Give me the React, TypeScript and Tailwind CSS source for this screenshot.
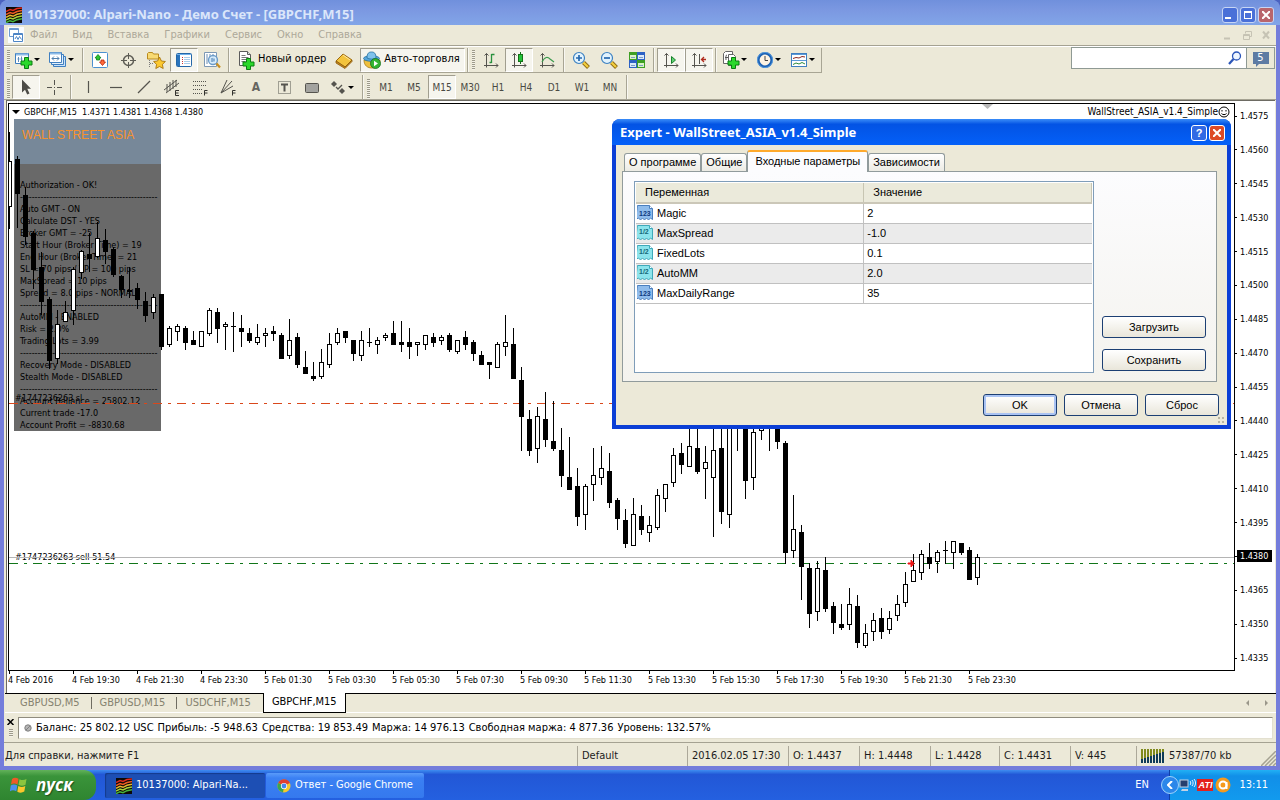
import { ReactNode } from "react";
import clsx from "clsx";

// [high, body top, body bottom, low, kind] in chart pixels, 8px per bar
type Kind = "up" | "down" | "doji";
type Candle = [number, number, number, number, Kind];

const FIRST_X = 9;
const STEP = 8;

const candles: Candle[] = [
  [132, 161, 206, 228, "up"],
  [156, 159, 193, 227, "down"],
  [187, 195, 236, 244, "down"],
  [231, 233, 269, 288, "down"],
  [252, 267, 301, 314, "down"],
  [297, 299, 360, 368, "down"],
  [310, 324, 358, 363, "up"],
  [301, 312, 321, 321, "up"],
  [267, 269, 310, 324, "up"],
  [250, 251, 272, 278, "up"],
  [233, 254, 258, 271, "down"],
  [222, 238, 256, 257, "up"],
  [229, 240, 251, 263, "down"],
  [247, 249, 274, 276, "down"],
  [275, 276, 289, 297, "down"],
  [267, 290, 291, 297, "down"],
  [283, 288, 299, 308, "down"],
  [292, 301, 315, 321, "down"],
  [294, 297, 312, 318, "up"],
  [294, 294, 346, 349, "down"],
  [326, 328, 344, 346, "up"],
  [324, 326, 331, 340, "up"],
  [326, 328, 342, 349, "down"],
  [331, 340, 344, 344, "down"],
  [331, 331, 346, 346, "up"],
  [308, 310, 333, 335, "up"],
  [308, 312, 328, 342, "down"],
  [322, 324, 326, 349, "up"],
  [312, 326, 326, 351, "doji"],
  [315, 328, 331, 346, "down"],
  [328, 333, 340, 342, "down"],
  [324, 337, 342, 344, "up"],
  [328, 333, 335, 346, "up"],
  [326, 331, 333, 340, "down"],
  [333, 335, 358, 358, "down"],
  [319, 340, 355, 358, "up"],
  [333, 337, 364, 367, "down"],
  [351, 367, 373, 373, "down"],
  [362, 376, 378, 380, "down"],
  [349, 362, 376, 378, "up"],
  [333, 344, 364, 367, "up"],
  [328, 333, 342, 344, "up"],
  [331, 331, 337, 342, "down"],
  [340, 340, 353, 360, "down"],
  [331, 340, 355, 360, "up"],
  [328, 342, 342, 346, "doji"],
  [337, 340, 344, 353, "up"],
  [333, 335, 337, 340, "up"],
  [321, 333, 344, 344, "down"],
  [321, 342, 344, 351, "down"],
  [328, 342, 346, 358, "down"],
  [342, 342, 344, 355, "up"],
  [335, 335, 344, 349, "up"],
  [333, 337, 342, 346, "down"],
  [335, 337, 340, 344, "up"],
  [333, 335, 349, 351, "down"],
  [340, 340, 351, 353, "up"],
  [331, 337, 344, 349, "down"],
  [340, 342, 353, 360, "down"],
  [351, 355, 364, 364, "down"],
  [362, 362, 364, 378, "down"],
  [342, 344, 367, 367, "up"],
  [315, 342, 346, 355, "up"],
  [328, 344, 378, 378, "down"],
  [367, 380, 416, 450, "down"],
  [410, 419, 450, 455, "down"],
  [407, 416, 448, 462, "up"],
  [392, 419, 439, 446, "down"],
  [401, 441, 448, 450, "down"],
  [428, 450, 475, 486, "down"],
  [437, 477, 489, 489, "down"],
  [468, 486, 516, 525, "down"],
  [484, 486, 514, 529, "up"],
  [448, 475, 484, 500, "up"],
  [446, 468, 477, 484, "up"],
  [453, 471, 502, 507, "down"],
  [498, 500, 518, 529, "down"],
  [509, 520, 543, 547, "down"],
  [498, 514, 545, 545, "up"],
  [505, 516, 529, 534, "down"],
  [516, 525, 532, 541, "up"],
  [489, 495, 527, 529, "up"],
  [484, 484, 498, 511, "up"],
  [448, 455, 482, 486, "up"],
  [443, 453, 464, 473, "down"],
  [420, 446, 466, 466, "up"],
  [420, 448, 471, 473, "down"],
  [446, 462, 468, 498, "up"],
  [420, 450, 477, 536, "up"],
  [420, 448, 511, 523, "down"],
  [420, 428, 514, 527, "up"],
  [410, 424, 424, 450, "doji"],
  [410, 412, 480, 498, "down"],
  [410, 432, 477, 489, "up"],
  [410, 412, 430, 439, "up"],
  [410, 424, 424, 450, "doji"],
  [410, 412, 441, 448, "down"],
  [441, 443, 552, 563, "down"],
  [495, 529, 550, 557, "up"],
  [525, 532, 566, 599, "down"],
  [563, 568, 613, 627, "down"],
  [561, 568, 611, 620, "up"],
  [557, 570, 608, 611, "down"],
  [602, 606, 622, 633, "down"],
  [604, 624, 627, 629, "down"],
  [588, 604, 624, 629, "up"],
  [595, 606, 642, 647, "down"],
  [624, 633, 645, 647, "up"],
  [613, 620, 631, 640, "up"],
  [608, 618, 631, 638, "down"],
  [611, 618, 629, 633, "up"],
  [595, 604, 615, 620, "up"],
  [572, 584, 602, 606, "up"],
  [554, 570, 581, 581, "up"],
  [550, 554, 572, 579, "up"],
  [543, 557, 563, 568, "down"],
  [550, 552, 561, 572, "up"],
  [541, 550, 550, 563, "doji"],
  [541, 541, 552, 568, "up"],
  [543, 543, 552, 554, "down"],
  [547, 550, 579, 579, "down"],
  [554, 557, 577, 584, "up"],
];

const prices = [
  "1.4575", "1.4560", "1.4545", "1.4530", "1.4515", "1.4500", "1.4485", "1.4470", "1.4455",
  "1.4440", "1.4425", "1.4410", "1.4395", "1.4380", "1.4365", "1.4350", "1.4335",
];

const times = [
  "4 Feb 2016", "4 Feb 19:30", "4 Feb 21:30", "4 Feb 23:30", "5 Feb 01:30", "5 Feb 03:30",
  "5 Feb 05:30", "5 Feb 07:30", "5 Feb 09:30", "5 Feb 11:30", "5 Feb 13:30", "5 Feb 15:30",
  "5 Feb 17:30", "5 Feb 19:30", "5 Feb 21:30", "5 Feb 23:30",
];

const RULE = "-".repeat(47);

const panelLines = [
  "Authorization - OK!",
  RULE,
  "Auto GMT - ON",
  "Calculate DST - YES",
  "Broker GMT = -25",
  "Start Hour (Broker Time) = 19",
  "End Hour (Broker Time) = 21",
  "SL = 70 pips / TP = 100 pips",
  "MaxSpread = 10 pips",
  "Spread = 8.0 pips - NORMAL",
  RULE,
  "AutoMM - ENABLED",
  "Risk = 2.0%",
  "Trading Lots = 3.99",
  RULE,
  "Recovery Mode - DISABLED",
  "Stealth Mode - DISABLED",
  RULE,
  "Account Ballance = 25802.12",
  "Current trade -17.0",
  "Account Profit = -8830.68",
];

const params = [
  { name: "Magic", value: "2", type: "int" },
  { name: "MaxSpread", value: "-1.0", type: "double" },
  { name: "FixedLots", value: "0.1", type: "double" },
  { name: "AutoMM", value: "2.0", type: "double" },
  { name: "MaxDailyRange", value: "35", type: "int" },
];

const menu = ["Файл", "Вид", "Вставка", "Графики", "Сервис", "Окно", "Справка"];
const timeframes = ["M1", "M5", "M15", "M30", "H1", "H4", "D1", "W1", "MN"];

/* ---------- icons ---------- */

function Svg({ children, size = 20 }: { children: ReactNode; size?: number }) {
  return (
    <svg width={size} height={size} viewBox={`0 0 ${size} ${size}`} className="shrink-0" aria-hidden="true">
      {children}
    </svg>
  );
}

function Plus({ x, y }: { x: number; y: number }) {
  return (
    <path
      d={`M${x + 3.5} ${y + 0.5}h4v3.500h3.500v4h-3.500v3.500h-4v-3.500h-3.500v-4h3.500z`}
      fill="#2bd82b"
      stroke="#0a7d12"
    />
  );
}

function Logo() {
  return (
    <Svg size={16}>
      <rect width="16" height="16" fill="#0c0a08" />
      <g fill="none" strokeWidth="1.500">
        <path d="M0 4.500l4-2 3 1 4-2 5-.5" stroke="#e02a1c" />
        <path d="M0 7.500l4-2 3 1 4-2 5-1" stroke="#ef5a22" />
        <path d="M0 10.300l4-2 3 1 4-2 5-1" stroke="#e8b530" />
        <path d="M0 13l4-2 3 1 4-2 5-1" stroke="#a4cf38" />
        <path d="M0 15.700l4-2 3 1 4-2 5-1" stroke="#47b53c" />
      </g>
    </Svg>
  );
}

const MdiIcon = () => (
  <Svg size={16}>
    <rect width="16" height="16" fill="#fbfdff" />
    <path d="M1.500 1.500h9v8h-9z" fill="#fff" stroke="#6d9ad0" />
    <path d="M1.500 2.500h9" stroke="#6d9ad0" />
    <path d="M5.500 6.500h9v8h-9z" fill="#fff" stroke="#4d85c6" />
    <path d="M5.500 7.500h9" stroke="#4d85c6" />
    <path d="M7 12l1.500-2.500 1.500 3 1.500-3 2 3" fill="none" stroke="#4d85c6" />
  </Svg>
);

const NewChartIcon = () => (
  <Svg>
    <path d="M1.500 3.500h13v10h-13z" fill="#fff" stroke="#3f7fc0" />
    <path d="M2 4.500h12" stroke="#8dbbe6" strokeWidth="2" />
    <path d="M4.500 7v5M3.500 9h2M7.500 6.500v5M6.500 9h2" stroke="#5d8cba" />
    <Plus x={7} y={7} />
  </Svg>
);

const ProfilesIcon = () => (
  <Svg>
    <path d="M5.500 6.500h12v10h-12z" fill="#c9e2f8" stroke="#3f7fc0" />
    <path d="M3.500 4.500h12v10h-12z" fill="#e3f1fc" stroke="#3f7fc0" />
    <path d="M1.500 2.500h12v10h-12z" fill="#fff" stroke="#3f7fc0" />
    <path d="M2 3.500h11" stroke="#8dbbe6" strokeWidth="2" />
    <path d="M4 8.500h7M4 8.500l2-2M4 8.500l2 2M11 8.500l-2-2M11 8.500l-2 2" stroke="#4f7fae" fill="none" />
  </Svg>
);

const MarketIcon = () => (
  <Svg>
    <rect x="2.500" y="2.500" width="15" height="15" rx="1" fill="#fff" stroke="#4a90d0" />
    <path d="M8 4.500l3 3.500H9.500v2h-3V8H5z" fill="#2fc52f" stroke="#0d7f16" strokeWidth=".8" />
    <path d="M12.500 15.500l3-3.500H14v-2h-3v2H9.500z" fill="#ff6a3a" stroke="#b5260d" strokeWidth=".8" />
  </Svg>
);

const TargetIcon = () => (
  <Svg>
    <circle cx="10.500" cy="10.500" r="5" fill="none" stroke="#5e5d55" strokeWidth="1.500" />
    <path d="M10.500 3v6M10.500 12v6M3 10.500h6M12 10.500h6" stroke="#5e5d55" />
  </Svg>
);

const NavigatorIcon = () => (
  <Svg>
    <path d="M1.500 3.500l1-1h4l1 1.500h5v5h-11z" fill="#f8da72" stroke="#b98a1e" />
    <path d="M3.500 10v7M4 13.500h4" stroke="#7c7c7c" strokeDasharray="1 1" />
    <path d="M13.500 7l1.900 4 4 .5-3 2.900.8 4.100-3.700-2-3.700 2 .8-4.100-3-2.900 4-.5z" fill="#fcc92f" stroke="#a8740c" strokeWidth=".9" />
  </Svg>
);

const TerminalIcon = () => (
  <Svg>
    <rect x="2.500" y="3.500" width="15" height="13" rx="1" fill="#fff" stroke="#2467a8" />
    <rect x="3" y="4" width="3" height="12" fill="#2a74bd" />
    <path d="M3 4.500h14" stroke="#6fb0ea" />
    <path d="M8 7.500h1M8 9.500h1M8 11.500h1M8 13.500h1" stroke="#c33" />
    <path d="M10 7.500h6M10 9.500h6M10 11.500h6M10 13.500h6" stroke="#a9cdea" />
  </Svg>
);

const TesterIcon = () => (
  <Svg>
    <path d="M2.500 2.500h12v14h-12z" fill="#fff" stroke="#7d98b4" />
    <path d="M5 4v10M8 4v8M11 4v8" stroke="#6d8fb3" />
    <circle cx="11" cy="10" r="4.500" fill="#d5ebfc" fillOpacity=".85" stroke="#6b9bc8" strokeWidth="1.300" />
    <path d="M10 8v4M12 8.500v3" stroke="#3a75ae" />
    <path d="M14.500 13.500l3.500 4" stroke="#c98f22" strokeWidth="2.200" />
  </Svg>
);

const NewOrderIcon = () => (
  <Svg>
    <path d="M3.500 1.500h8l3 3v11h-11z" fill="#fff" stroke="#5b5b5b" />
    <path d="M11.500 1.500v3h3" fill="#ddd" stroke="#5b5b5b" />
    <path d="M5.500 5.500h4M5.500 7.500h7M5.500 9.500h5M5.500 11.500h4" stroke="#777" />
    <Plus x={7} y={8} />
  </Svg>
);

const BookIcon = () => (
  <Svg>
    <path d="M2 11l7-7 9 6-7 7z" fill="#f2c33c" stroke="#9c6a10" />
    <path d="M2 11v2l9 5.500 7-7V10l-7 7z" fill="#c98a1c" stroke="#8a5a0c" strokeWidth=".8" />
    <path d="M9 5l7 5" stroke="#ffe79b" />
  </Svg>
);

const AutoTradeIcon = () => (
  <Svg>
    <path d="M2 10c0 6 4 8 8 8s8-2 8-8z" fill="#efbf3c" stroke="#a57b17" strokeWidth=".8" />
    <ellipse cx="9.500" cy="8.500" rx="8" ry="2.800" fill="#58a7dc" stroke="#25709f" strokeWidth=".8" />
    <path d="M5 8c0-5 2-6 4.500-6S14 3 14 8c-2 1.400-7 1.400-9 0z" fill="#7fc2ec" stroke="#25709f" strokeWidth=".8" />
    <circle cx="13.500" cy="13.500" r="5" fill="#34b533" stroke="#147018" strokeWidth=".8" />
    <path d="M12 10.800l4 2.700-4 2.700z" fill="#fff" />
  </Svg>
);

const Axes = () => (
  <path d="M5.500 3.500v14M3 15.500h14M3.500 5.500l2-2 2 2M15 13.500l2 2-2 2" fill="none" stroke="#55544e" />
);

const BarsIcon = () => (
  <Svg>
    <Axes />
    <path d="M10.500 5v8M8.500 12.500h2M10.500 4.500h3M10.500 4v9" stroke="#28903c" strokeWidth="1.300" />
  </Svg>
);
const CandlesIcon = () => (
  <Svg>
    <Axes />
    <path d="M11.500 2v12" stroke="#147018" />
    <rect x="9.500" y="4.500" width="4" height="7" fill="#24c33a" stroke="#147018" />
  </Svg>
);
const LineIcon = () => (
  <Svg>
    <Axes />
    <path d="M5 12c3-6 6-5 8-3l4 3" fill="none" stroke="#3d9a4e" strokeWidth="1.200" />
  </Svg>
);

function ZoomIcon({ plus }: { plus?: boolean }) {
  return (
    <Svg>
      <path d="M12.500 12.500l5 5" stroke="#8f6b14" strokeWidth="4" />
      <path d="M12.500 12.500l4.500 4.500" stroke="#f3cf3f" strokeWidth="2.200" />
      <circle cx="8" cy="8" r="5.500" fill="#e2f3fd" stroke="#3b80c0" strokeWidth="1.200" />
      <path d={plus ? "M5 8h6M8 5v6" : "M5 8h6"} stroke="#2668ae" strokeWidth="1.700" />
    </Svg>
  );
}

const TileIcon = () => (
  <Svg>
    <rect x="2" y="2" width="8" height="8" fill="#3e9f24" />
    <rect x="10" y="2" width="8" height="8" fill="#2d62c4" />
    <rect x="2" y="10" width="8" height="8" fill="#2d62c4" />
    <rect x="10" y="10" width="8" height="8" fill="#3e9f24" />
    <path d="M3 5h6v4H3zM11 13h6v4h-6z" fill="#d9f3c8" />
    <path d="M11 5h6v4h-6zM3 13h6v4H3z" fill="#dbe9fb" />
    <path d="M4 7.500h4M12 7.500h4M4 15.500h4M12 15.500h4" stroke="#7e9fc4" />
  </Svg>
);

const ScrollIcon = () => (
  <Svg>
    <Axes />
    <path d="M10.500 6.500l4 3.500-4 3.500z" fill="#5fd072" stroke="#17812a" />
  </Svg>
);
const ShiftIcon = () => (
  <Svg>
    <Axes />
    <path d="M10.500 4v10" stroke="#55544e" />
    <path d="M17 9.500h-4.500M15 7l-2.500 2.500L15 12" fill="none" stroke="#b02a1d" strokeWidth="1.300" />
  </Svg>
);

const IndicatorsIcon = () => (
  <Svg>
    <path d="M4.500 1.500h7v12h-9v-10z" fill="#fff" stroke="#666" />
    <path d="M7.500 4.500h5l2 2v9h-7z" fill="#fff" stroke="#666" />
    <path d="M6 5c-1.500 0-1 2-1 5M4 7.500h3" stroke="#555" fill="none" />
    <Plus x={7} y={7} />
  </Svg>
);
const ClockIcon = () => (
  <Svg>
    <circle cx="10" cy="10" r="6.700" fill="#fdf3e3" stroke="#1d62b4" strokeWidth="2.600" />
    <circle cx="10" cy="10" r="7.600" fill="none" stroke="#62a9ec" strokeWidth=".7" />
    <path d="M10 6v4.500h3" fill="none" stroke="#444" />
  </Svg>
);
const TemplatesIcon = () => (
  <Svg>
    <rect x="2.500" y="3.500" width="15" height="13" fill="#fff" stroke="#3f7fc0" />
    <path d="M3 4.500h14M3 10.500h14" stroke="#5b9ad8" />
    <path d="M4 8.500l3-1 3 .5 3-1.500 3 .5" fill="none" stroke="#8c2a20" />
    <path d="M4 14.500l3-1.500 3 1 3-1.500 3 1.500" fill="none" stroke="#2b8a3a" />
  </Svg>
);

const CursorIcon = () => (
  <Svg>
    <path d="M6 2.500v13l3-2.800 2.200 4.800 2.300-1-2.200-4.700H15z" fill="#4d4c47" />
  </Svg>
);
const CrossIcon = () => (
  <Svg>
    <path d="M10.500 3v5M10.500 13v5M3 10.500h5M13 10.500h5" stroke="#55544e" />
    <path d="M10 10.500h1" stroke="#55544e" />
  </Svg>
);
const StrokeIcon = ({ d }: { d: string }) => (
  <Svg>
    <path d={d} stroke="#55544e" strokeWidth="1.200" fill="none" />
  </Svg>
);
const ChannelIcon = () => (
  <Svg>
    <path d="M2 13L15 3M4 16L17 6M5 7v8M8 5v9M11 3v9M14 3v7" stroke="#55544e" fill="none" />
    <path d="M17 13.500h-3.500v5H17M13.500 16h3" stroke="#33322e" fill="none" />
  </Svg>
);
const FiboIcon = () => (
  <Svg>
    <path d="M3 4.500h14M3 8.500h14M3 12.500h10M3 16.500h9" stroke="#55544e" strokeDasharray="1 1" />
    <path d="M17.500 13.500h-3v5M14.500 16h3" stroke="#33322e" fill="none" />
  </Svg>
);
const FanIcon = () => (
  <Svg>
    <path d="M3 16L9 3M3 16L14 4M3 16l12-7" stroke="#55544e" fill="none" />
    <path d="M17.500 13.500h-3v5M14.500 16h3" stroke="#33322e" fill="none" />
  </Svg>
);
const LabelIcon = () => (
  <Svg>
    <rect x="4.500" y="4.500" width="12" height="12" fill="none" stroke="#55544e" strokeDasharray="1 1" />
    <path d="M7 7.500h7M10.500 7.500v7" stroke="#55544e" strokeWidth="2" />
  </Svg>
);
const RectIcon = () => (
  <Svg>
    <rect x="3.500" y="6.500" width="13" height="9" rx="1" fill="#a3a39f" stroke="#55544e" />
  </Svg>
);
const ArrowsIcon = () => (
  <Svg>
    <path d="M6 4l3 3-3 3-3-3z" fill="#55544e" />
    <path d="M8 10l2 2 4-4" stroke="#55544e" strokeWidth="1.300" fill="none" />
    <path d="M14 11l3 3-3 3-3-3z" fill="#55544e" />
  </Svg>
);

/* ---------- toolbar bits ---------- */

function Tool({
  label,
  pressed,
  arrow,
  children,
}: {
  label: string;
  pressed?: boolean;
  arrow?: boolean;
  children: ReactNode;
}) {
  return (
    <button
      aria-label={label}
      title={label}
      className={clsx(
        "flex h-6 shrink-0 items-center justify-center border",
        arrow ? "w-[34px] pr-1" : "w-7",
        pressed
          ? "border-t-[#a19e8f] border-l-[#a19e8f] border-r-white border-b-white bg-[#f6f5ee]"
          : "border-transparent"
      )}
    >
      {children}
      {arrow && <span className="border-x-[3px] border-t-[3px] border-x-transparent border-t-black" />}
    </button>
  );
}

const Sep = () => <span className="mx-[2px] h-6 w-[2px] shrink-0 border-l border-[#a8a594] border-r border-r-[#f8f7f1]" />;

const Grip = () => (
  <span className="mr-[2px] ml-px h-5 w-[3px] shrink-0 bg-[repeating-linear-gradient(#9d9a8a_0_1px,#f4f2e8_1px_2px)]" />
);

/* ---------- chart ---------- */

function Candles() {
  return (
    <svg className="absolute inset-0 h-full w-full" role="img" aria-label="GBPCHF,M15">
      <g transform="translate(-9 -104)">
        <path d="M9 557.500h1240" stroke="#b4b4b4" />
        <path d="M9 403.500h1240" stroke="#d9481c" strokeDasharray="9 6 3 6" />
        <path d="M9 563.500h1240" stroke="#11761a" strokeDasharray="9 6 3 6" />
        <g shapeRendering="crispEdges">
          {candles.map(([high, top, bottom, low, kind], i) => {
            const x = FIRST_X + i * STEP;
            return (
              <g key={x}>
                <rect x={x} y={high} width="1" height={low - high + 1} fill="#000" />
                {kind === "doji" && <rect x={x - 2} y={top} width="5" height="1" fill="#000" />}
                {kind === "down" && <rect x={x - 2} y={top} width="5" height={bottom - top + 1} fill="#000" />}
                {kind === "up" && (
                  <rect x={x - 1.5} y={top + 0.5} width="4" height={bottom - top} fill="#fff" stroke="#000" />
                )}
              </g>
            );
          })}
        </g>
        <path d="M908 563h3v-3l3 3.500-3 3.500v-3h-3z" fill="#f01414" stroke="#f01414" />
        <path d="M982 104h11l-5.500 5z" fill="#b9b9b9" />
      </g>
    </svg>
  );
}

function InfoPanel() {
  return (
    <div className="absolute top-[15px] left-[5px] w-[147px] overflow-hidden bg-[#696969]">
      <h2 className="h-[45px] bg-[#778899] px-2 pt-2 font-['Liberation_Sans'] text-[12px] leading-4 text-[#f7922c]">
        WALL STREET ASIA
      </h2>
      <div className="px-[6px] pt-[15px]">
        {panelLines.map((line, i) => (
          <p key={i} className="h-3 leading-3 whitespace-nowrap">
            {line}
          </p>
        ))}
      </div>
    </div>
  );
}

function Chart() {
  return (
    <main className="relative ml-[2px] mr-px flex min-h-0 flex-1 flex-col border-t border-l border-[#6d6b63] bg-white pt-[2px] pl-px font-['DejaVu_Sans_Condensed','Noto_Sans',sans-serif] text-[9px] text-black">
      <div className="flex min-h-0 flex-1">
        <div className="relative min-w-0 flex-1 overflow-hidden border border-black">
          <InfoPanel />
          <span className="absolute top-[288px] left-[6px] leading-3">#1747236263 sl</span>
          <span className="absolute top-[447px] left-[6px] leading-3">#1747236263 sell 51.54</span>
          <Candles />
          <div className="absolute inset-x-0 top-0 flex items-center justify-between pr-1 pl-[3px]">
            <span className="flex items-center gap-1 leading-4">
              <span className="border-x-4 border-t-4 border-x-transparent border-t-black" />
              <span className="whitespace-pre">GBPCHF,M15  1.4371 1.4381 1.4368 1.4380</span>
            </span>
            <span className="flex items-center text-[10px] leading-4">
              WallStreet_ASIA_v1.4_Simple
              <svg width="12" height="12" viewBox="0 0 12 12" fill="none" stroke="#000" aria-hidden="true">
                <circle cx="6" cy="6" r="5" />
                <path d="M4 4v1.500M8 4v1.500M3.500 7.500c1 1.500 4 1.500 5 0" />
              </svg>
            </span>
          </div>
        </div>
        <ul className="flex w-10 shrink-0 flex-col justify-between py-[7px]">
          {prices.map((p) => (
            <li key={p} className="flex items-center leading-3">
              <span className="h-px w-[2px] bg-black" />
              <span className={clsx("pr-1 pl-[3px]", p === "1.4380" && "bg-black text-white")}>{p}</span>
            </li>
          ))}
        </ul>
      </div>
      <ul className="flex h-[22px] shrink-0 overflow-hidden">
        {times.map((t) => (
          <li key={t} className="w-16 shrink-0 whitespace-nowrap">
            <span className="ml-px block h-[3px] w-px bg-black" />
            <span className="block leading-3">{t}</span>
          </li>
        ))}
      </ul>
      <ExpertDialog />
    </main>
  );
}

/* ---------- dialog ---------- */

function ParamIcon({ type }: { type: string }) {
  const int = type === "int";
  return (
    <Svg size={16}>
      <path
        d="M.5.500h12l3 3v11l-2-1.500-2 2-2-2-2 2-2-2-2 2-2-2-3 1.500z"
        fill={int ? "#8fbcec" : "#8ce4ec"}
        stroke={int ? "#4a7fbe" : "#3fa9ba"}
      />
      <path d="M12.500.500v3h3" fill="#fff" stroke={int ? "#4a7fbe" : "#3fa9ba"} />
      <text
        x="2"
        y={int ? 11 : 9}
        fontSize="7"
        fontWeight="bold"
        fontFamily="Liberation Sans, sans-serif"
        fill={int ? "#0d3a80" : "#136878"}
      >
        {int ? "123" : "1/2"}
      </text>
    </Svg>
  );
}

function DialogButton({ children, wide, primary }: { children: string; wide?: boolean; primary?: boolean }) {
  return (
    <button
      className={clsx(
        "h-[22px] rounded-[3px] border border-[#1c3f73] bg-linear-to-b from-white to-[#e9e6da]",
        wide ? "w-[104px]" : "w-[74px]",
        primary && "shadow-[inset_0_0_0_2px_#a9c3f3]"
      )}
    >
      {children}
    </button>
  );
}

const tabClass = "h-[18px] rounded-t-[3px] border border-b-0 border-[#919b9c] bg-linear-to-b from-white to-[#ecebe4] px-1";

function ExpertDialog() {
  return (
    <section
      role="dialog"
      aria-label="Expert - WallStreet_ASIA_v1.4_Simple"
      className="absolute top-[18px] left-[605px] w-[619px] rounded-t-lg bg-[#0b3fd6] px-1 pb-1 font-['Liberation_Sans',sans-serif] text-[11px]"
    >
      <header className="-mx-1 flex h-[26px] items-center rounded-t-lg bg-linear-to-b from-[#3a8cf8] via-[#0353e4] via-20% to-[#0460f8] pt-[2px] pr-[6px] pl-2">
        <h1 className="font-['Noto_Sans','Open_Sans',sans-serif] text-[13px] font-bold text-white">
          Expert - WallStreet_ASIA_v1.4_Simple
        </h1>
        <button aria-label="Справка" className="ml-auto h-4 w-4 rounded-[3px] border border-white bg-[#3169e4] text-[11px] leading-3 font-bold text-white">
          ?
        </button>
        <button aria-label="Закрыть" className="ml-[2px] flex h-4 w-4 items-center justify-center rounded-[3px] border border-white bg-[#dd4a26]">
          <svg width="8" height="8" viewBox="0 0 8 8" stroke="#fff" strokeWidth="2" aria-hidden="true">
            <path d="M0 0l8 8M8 0L0 8" />
          </svg>
        </button>
      </header>
      <div className="relative bg-[#ece9d8] pt-[5px] pr-2 pb-[9px] pl-[6px] text-black">
        <div role="tablist" className="flex items-end pl-[2px]">
          <button role="tab" className={tabClass}>О программе</button>
          <button role="tab" className={tabClass}>Общие</button>
          <button
            role="tab"
            aria-selected="true"
            className="-mb-px h-[22px] rounded-t-[3px] border border-t-2 border-b-0 border-[#919b9c] border-t-[#ffaa2c] bg-[#fcfcfe] px-[7px] pb-[2px]"
          >
            Входные параметры
          </button>
          <button role="tab" className={tabClass}>Зависимости</button>
        </div>
        <div className="mr-[2px] flex gap-2 border border-[#919b9c] bg-linear-to-b from-[#fcfcfe] to-[#f4f3ee] pt-[9px] pr-[10px] pb-2 pl-[11px]">
          <div className="h-[192px] flex-1 border border-[#7f9db9] bg-white p-px">
            <table className="w-full table-fixed border-collapse">
              <thead>
                <tr className="h-5 border-b-2 border-[#cbc7b8] bg-[#ebeadb] text-left">
                  <th className="w-1/2 border-r border-[#c7c5b2] pl-[9px] font-normal">Переменная</th>
                  <th className="border-r border-[#c7c5b2] pl-[9px] font-normal">Значение</th>
                </tr>
              </thead>
              <tbody>
                {params.map((p, i) => (
                  <tr key={p.name} className={clsx("h-5 border-b border-[#c0c0c0]", i % 2 === 1 && "bg-[#ebebeb]")}>
                    <td className="border-r border-[#c0c0c0] p-0">
                      <span className="flex items-center gap-1 pl-px">
                        <ParamIcon type={p.type} />
                        {p.name}
                      </span>
                    </td>
                    <td className="py-0 pl-[3px]">{p.value}</td>
                  </tr>
                ))}
              </tbody>
            </table>
          </div>
          <div className="flex flex-col justify-end gap-[11px] pb-[2px]">
            <DialogButton wide>Загрузить</DialogButton>
            <DialogButton wide>Сохранить</DialogButton>
          </div>
        </div>
        <footer className="mt-3 flex justify-end gap-[7px]">
          <DialogButton primary>OK</DialogButton>
          <DialogButton>Отмена</DialogButton>
          <DialogButton>Сброс</DialogButton>
        </footer>
        <span className="absolute right-[3px] bottom-[2px] h-[7px] w-[7px] bg-[radial-gradient(#b8b5a4_1px,transparent_1px)] bg-size-[4px_4px]" />
      </div>
    </section>
  );
}

/* ---------- window ---------- */

function TitleBar() {
  const box = "flex h-4 w-4 items-center justify-center rounded-[3px] border border-[#c7d6f5]";
  return (
    <header className="-mx-1 flex h-[25px] shrink-0 items-center rounded-t-lg bg-linear-to-b from-[#7090dc] via-[#7b98e1] via-40% to-[#82a5e8] pt-1 pr-[6px] pl-[6px]">
      <Logo />
      <h1 className="ml-[5px] font-['Noto_Sans','Open_Sans',sans-serif] text-[13px] font-bold text-[#dbe6fa]">
        10137000: Alpari-Nano - Демо Счет - [GBPCHF,M15]
      </h1>
      <div className="ml-auto flex gap-[2px]">
        <button aria-label="Свернуть" className={clsx(box, "bg-[#4a70d8]")}>
          <span className="mt-[6px] mr-1 h-[2px] w-[6px] bg-white" />
        </button>
        <button aria-label="Развернуть" className={clsx(box, "bg-[#4a70d8]")}>
          <span className="h-2 w-2 border border-t-2 border-white" />
        </button>
        <button aria-label="Закрыть" className={clsx(box, "bg-[#b9656c]")}>
          <svg width="8" height="8" viewBox="0 0 8 8" stroke="#fff" strokeWidth="2" aria-hidden="true">
            <path d="M0 0l8 8M8 0L0 8" />
          </svg>
        </button>
      </div>
    </header>
  );
}

function MenuBar() {
  return (
    <nav className="flex h-[21px] shrink-0 items-center border-b border-[#a5a292] pr-1 pl-[4px] text-[#aca899]">
      <MdiIcon />
      <ul className="ml-[6px] flex gap-[15px]">
        {menu.map((m) => (
          <li key={m}>
            <button>{m}</button>
          </li>
        ))}
      </ul>
      <svg width="50" height="12" viewBox="0 0 50 12" className="ml-auto" fill="none" stroke="#c6c3b4" aria-hidden="true">
        <path d="M2 9.500h6" strokeWidth="2" />
        <path d="M23.500 4.500v-2h6v5h-2M21.500 5.500h6v5h-6zM21.500 6.500h6" />
        <path d="M41 2.500l6 7M47 2.500l-6 7" strokeWidth="2" />
      </svg>
    </nav>
  );
}

function MainToolbar() {
  return (
    <div className="flex h-[27px] shrink-0 items-center border-t border-white pl-[2px]">
      <div className="flex items-center border-r border-b border-[#a8a594]">
        <Grip />
        <Tool label="Новый график" arrow><NewChartIcon /></Tool>
        <Tool label="Профили" arrow><ProfilesIcon /></Tool>
        <Sep />
        <Tool label="Обзор рынка"><MarketIcon /></Tool>
        <Tool label="Окно данных"><TargetIcon /></Tool>
        <Tool label="Навигатор"><NavigatorIcon /></Tool>
        <Tool label="Терминал" pressed><TerminalIcon /></Tool>
        <Tool label="Тестер стратегий"><TesterIcon /></Tool>
        <Sep />
        <button className="flex h-6 items-center gap-[2px] px-1">
          <NewOrderIcon />
          <span>Новый ордер</span>
        </button>
        <Tool label="MetaEditor"><BookIcon /></Tool>
        <button className="ml-[2px] flex h-6 items-center gap-[2px] border border-t-[#a19e8f] border-l-[#a19e8f] border-r-white border-b-white bg-[#f6f5ee] pr-1 pl-px">
          <AutoTradeIcon />
          <span>Авто-торговля</span>
        </button>
        <Sep />
        <Grip />
        <Tool label="Бары"><BarsIcon /></Tool>
        <Tool label="Японские свечи" pressed><CandlesIcon /></Tool>
        <Tool label="Линия"><LineIcon /></Tool>
        <Sep />
        <Tool label="Увеличить"><ZoomIcon plus /></Tool>
        <Tool label="Уменьшить"><ZoomIcon /></Tool>
        <Tool label="Мозаика"><TileIcon /></Tool>
        <Sep />
        <Tool label="Автопрокрутка" pressed><ScrollIcon /></Tool>
        <Tool label="Сдвиг графика" pressed><ShiftIcon /></Tool>
        <Sep />
        <Tool label="Индикаторы" arrow><IndicatorsIcon /></Tool>
        <Tool label="Периоды" arrow><ClockIcon /></Tool>
        <Tool label="Шаблоны" arrow><TemplatesIcon /></Tool>
      </div>
      <div className="mr-px mb-1 ml-auto flex h-[22px] border border-[#8f9a94]">
        <label className="flex w-[174px] items-center bg-white pr-1">
          <input type="text" aria-label="Поиск" className="min-w-0 flex-1 px-1 outline-none" />
          <svg width="14" height="14" viewBox="0 0 14 14" fill="none" stroke="#2a55b8" aria-hidden="true">
            <circle cx="8.500" cy="5" r="4" fill="#eef6ff" strokeWidth="1.300" />
            <path d="M5.500 8L1 13" strokeWidth="2.200" />
          </svg>
        </label>
        <button className="flex w-7 items-center justify-center border-l border-[#8f9a94]">
          <span className="relative h-3 w-4 bg-[#5d7ba3] text-[11px] leading-3 text-white">
            5
            <span className="absolute -bottom-[3px] left-[3px] border-t-[3px] border-r-[3px] border-t-[#5d7ba3] border-r-transparent" />
          </span>
        </button>
      </div>
    </div>
  );
}

function DrawToolbar() {
  return (
    <div className="flex h-[27px] shrink-0 items-end border-b border-[#a5a292] pl-[2px] text-[#4a4943]">
      <Grip />
      <Tool label="Курсор" pressed><CursorIcon /></Tool>
      <Tool label="Перекрестие"><CrossIcon /></Tool>
      <Sep />
      <Tool label="Вертикальная линия"><StrokeIcon d="M10.500 4v12" /></Tool>
      <Tool label="Горизонтальная линия"><StrokeIcon d="M4 10.500h12" /></Tool>
      <Tool label="Трендовая линия"><StrokeIcon d="M4 16L16 4" /></Tool>
      <Tool label="Канал"><ChannelIcon /></Tool>
      <Tool label="Линии Фибоначчи"><FiboIcon /></Tool>
      <Tool label="Веер Фибоначчи"><FanIcon /></Tool>
      <Tool label="Текст"><span className="text-[12px] font-bold text-[#66655f]">A</span></Tool>
      <Tool label="Текстовая метка"><LabelIcon /></Tool>
      <Tool label="Прямоугольник"><RectIcon /></Tool>
      <Tool label="Стрелки" arrow><ArrowsIcon /></Tool>
      <Sep />
      <Grip />
      {timeframes.map((tf) => (
        <Tool key={tf} label={tf} pressed={tf === "M15"}>
          <span className="text-[10px]">{tf}</span>
        </Tool>
      ))}
      <Sep />
    </div>
  );
}

function ChartTabs() {
  return (
    <div className="ml-px flex h-5 shrink-0 items-start border-t border-b border-t-black border-b-white pl-[7px] text-[#85826f]">
      {["GBPUSD,M5", "GBPUSD,M15", "USDCHF,M15"].map((t, i) => (
        <button key={t} className="flex h-[18px] items-center pl-2">
          {t}
          <span className={clsx("ml-[11px] h-3 w-px", i < 2 && "bg-[#6f6d62]")} />
        </button>
      ))}
      <button className="-mt-px h-[20px] border border-t-0 border-black bg-white px-2 text-black">GBPCHF,M15</button>
      <span className="mr-2 ml-auto flex h-[18px] items-center gap-4">
        <span className="border-y-[3px] border-r-[3px] border-y-transparent border-r-[#9a978a]" />
        <span className="border-y-[3px] border-l-[3px] border-y-transparent border-l-[#9a978a]" />
      </span>
    </div>
  );
}

function AccountBar() {
  return (
    <div className="flex h-[30px] shrink-0 border-b border-[#a5a292] pt-1 pr-[3px] pb-[3px] pl-[3px]">
      <div className="flex w-[11px] flex-col gap-1 pt-[2px]">
        <svg width="7" height="6" viewBox="0 0 7 6" stroke="#000" strokeWidth="1.500" aria-hidden="true">
          <path d="M.5 0l6 6M6.500 0l-6 6" />
        </svg>
        <span className="ml-[2px] h-2 w-1 bg-[repeating-linear-gradient(#9d9a8a_0_1px,#f4f2e8_1px_2px)]" />
      </div>
      <div className="flex flex-1 items-center gap-1 border border-t-[#8f8c7e] border-l-[#8f8c7e] border-r-[#e3e0d0] border-b-[#e3e0d0] bg-white pl-[5px] text-black">
        <svg width="8" height="8" viewBox="0 0 8 8" aria-hidden="true">
          <circle cx="4" cy="4" r="3.200" fill="#b5b5b5" stroke="#808080" />
          <path d="M2 6l4-4" stroke="#808080" />
        </svg>
        <p className="flex gap-1 whitespace-nowrap">
          <span>Баланс: 25 802.12 USC</span>
          <span>Прибыль: -5 948.63</span>
          <span>Средства: 19 853.49</span>
          <span>Маржа: 14 976.13</span>
          <span>Свободная маржа: 4 877.36</span>
          <span>Уровень: 132.57%</span>
        </p>
      </div>
    </div>
  );
}

function StatusBar() {
  const cell = "flex h-5 shrink-0 items-center border-l border-[#aca899] pl-1 whitespace-nowrap";
  return (
    <footer className="flex h-[23px] shrink-0 items-end text-[#1c1c1c]">
      <span className="flex h-5 flex-1 items-center pl-px">Для справки, нажмите F1</span>
      <span className={clsx(cell, "w-[110px]")}>Default</span>
      <span className={clsx(cell, "w-[101px]")}>2016.02.05 17:30</span>
      <span className={clsx(cell, "w-[71px]")}>O: 1.4437</span>
      <span className={clsx(cell, "w-[71px]")}>H: 1.4448</span>
      <span className={clsx(cell, "w-[69px]")}>L: 1.4428</span>
      <span className={clsx(cell, "w-[71px]")}>C: 1.4431</span>
      <span className={clsx(cell, "w-[66px]")}>V: 445</span>
      <span className={clsx(cell, "w-[125px] gap-1")}>
        <svg width="24" height="14" viewBox="0 0 24 14" shapeRendering="crispEdges" aria-hidden="true">
          {[0, 1, 2, 3, 4, 5, 6, 7].map((n) => (
            <g key={n}>
              <rect x={n * 3} y="0" width="2" height={10 - n} fill="#7f8a1c" />
              <rect x={n * 3} y={10 - n} width="2" height={4 + n} fill="#0e3b58" />
            </g>
          ))}
        </svg>
        57387/70 kb
      </span>
      <svg width="15" height="15" viewBox="0 0 15 15" stroke="#a5a292" aria-hidden="true">
        <path d="M0 15L15 0M4 15L15 4M8 15l7-7M12 15l3-3" strokeWidth="1.500" />
      </svg>
    </footer>
  );
}

function Taskbar() {
  return (
    <div className="flex h-[30px] shrink-0 bg-linear-to-b from-[#3f8cf0] via-[#2257d6] via-15% to-[#2460e0] text-white">
      <button className="flex w-24 items-center gap-2 rounded-r-xl bg-linear-to-b from-[#62b25a] via-[#3a943a] via-20% to-[#2f8530] pl-[10px]">
        <svg width="18" height="18" viewBox="0 0 18 18" aria-hidden="true">
          <path d="M2 3c2-1.500 4-1.500 6.500-.2L7.500 8.500C5 7.300 3 7.300 1 8.600z" fill="#ee5a28" />
          <path d="M9.500 3.200c2.500 1.200 4.500 1.200 7-.2l-1 5.700c-2.500 1.400-4.500 1.400-7 .1z" fill="#8bc53f" />
          <path d="M.800 9.600c2-1.300 4-1.300 6.500-.1l-1 5.700C4 14 2 14-.2 15.300z" fill="#4c8ff0" />
          <path d="M8.300 10c2.500 1.200 4.500 1.200 7-.1l-1 5.700c-2.500 1.400-4.500 1.400-7 .1z" fill="#fcc72c" />
        </svg>
        <span className="font-['Open_Sans','Noto_Sans',sans-serif] text-[17px] leading-4 font-bold italic [text-shadow:1px_1px_1px_#1c4f1c]">
          пуск
        </span>
      </button>
      <button className="mt-[3px] ml-[9px] flex h-[25px] w-40 items-center gap-1 rounded-[2px] bg-[#1d4fb4] pl-[11px] shadow-[inset_1px_1px_1px_#143a8c]">
        <Logo />
        10137000: Alpari-Na...
      </button>
      <button className="mt-[3px] ml-px flex h-[25px] w-[158px] items-center gap-1 rounded-[2px] bg-linear-to-b from-[#5a9bfa] via-[#3b80f3] via-20% to-[#3579ee] pl-[11px]">
        <svg width="14" height="14" viewBox="0 0 14 14" aria-hidden="true">
          <circle cx="7" cy="7" r="6.500" fill="#f5c92b" />
          <path d="M7 7L1.200 4A6.500 6.500 0 0 1 12.900 4z" fill="#e0402f" />
          <path d="M7 7L1.200 4A6.500 6.500 0 0 0 6 13.400z" fill="#3aa552" />
          <circle cx="7" cy="7" r="3.100" fill="#fff" />
          <circle cx="7" cy="7" r="2.400" fill="#4486ee" />
        </svg>
        Ответ - Google Chrome
      </button>
      <span className="mr-5 ml-auto self-center">EN</span>
      <div className="relative flex w-[111px] items-center justify-end border-l border-[#0f3fa8] bg-linear-to-b from-[#22b0f4] via-[#118fe8] via-20% to-[#129aee] pr-3">
        <button
          aria-label="Отображать скрытые значки"
          className="absolute -left-[9px] flex h-[18px] w-[18px] items-center justify-center rounded-full border border-[#9fd2fb] bg-[#2b87ea]"
        >
          <svg width="6" height="8" viewBox="0 0 6 8" fill="none" stroke="#fff" strokeWidth="2" aria-hidden="true">
            <path d="M5 0L1 4l4 4" />
          </svg>
        </button>
        <svg width="18" height="16" viewBox="0 0 18 16" aria-hidden="true">
          <rect x="1" y="3" width="8" height="7" fill="#27406e" stroke="#c4d2e4" />
          <path d="M3 12h6v2H2z" fill="#c4d2e4" />
          <path d="M11 4c1 1 1 3 0 4M13 3c1.500 2 1.500 4 0 6M15 2c2 2.500 2 5.500 0 8" fill="none" stroke="#e8f3ff" />
        </svg>
        <span className="flex h-3 w-4 items-center justify-center bg-[#e3211c] font-['Liberation_Sans'] text-[9px] leading-3 font-bold italic">
          ATI
        </span>
        <svg width="16" height="16" viewBox="0 0 16 16" className="mr-2 ml-[2px]" aria-hidden="true">
          <circle cx="8" cy="8" r="7.500" fill="#f59a1c" />
          <circle cx="8" cy="8" r="3.500" fill="none" stroke="#fff" strokeWidth="2" />
          <path d="M11.500 5v7" stroke="#fff" strokeWidth="2" />
        </svg>
        13:11
      </div>
    </div>
  );
}

export default function App() {
  return (
    <div className="flex h-screen flex-col overflow-hidden bg-[#4a63c0] font-['DejaVu_Sans_Condensed','Noto_Sans',sans-serif] text-[11px] text-black">
      <div className="flex min-h-0 flex-1 flex-col rounded-t-lg border-x-4 border-b-4 border-[#747ddb] bg-[#ece9d8]">
        <TitleBar />
        <MenuBar />
        <MainToolbar />
        <DrawToolbar />
        <Chart />
        <ChartTabs />
        <AccountBar />
        <StatusBar />
      </div>
      <Taskbar />
    </div>
  );
}
